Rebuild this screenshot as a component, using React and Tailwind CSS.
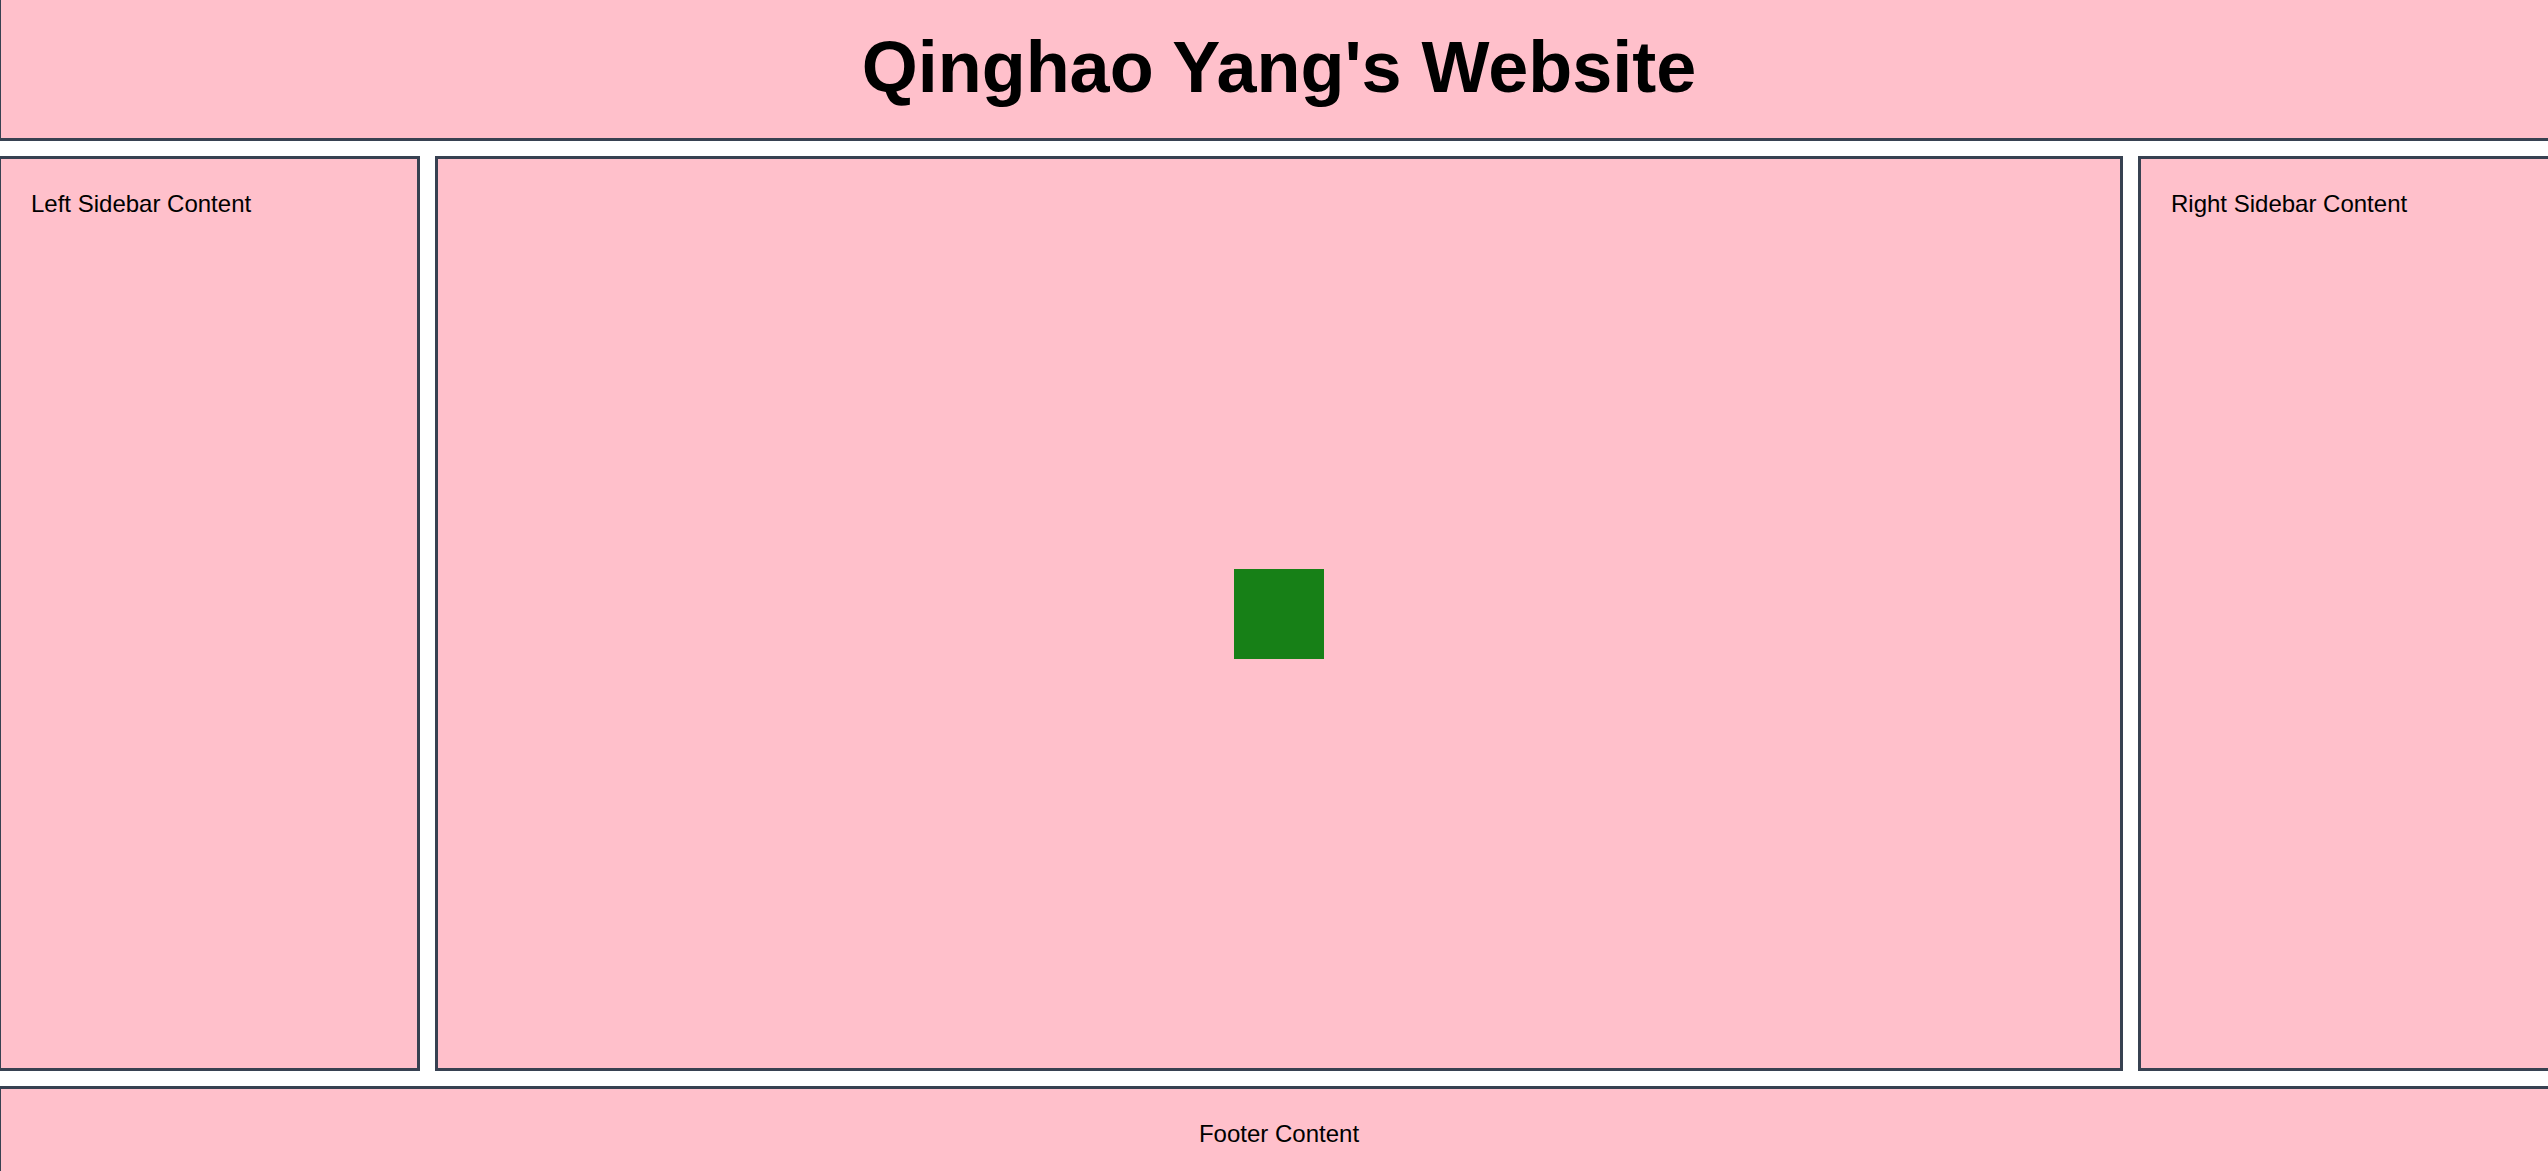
export default function App() {
  return (
    <div
      className="w-full h-[1171px] overflow-hidden bg-white text-black"
      style={{ fontFamily: '"Liberation Sans", Arial, Helvetica, sans-serif' }}
    >
      <div className="w-[2562px] ml-[-2px] mt-[-3px] flex flex-col gap-[15px]">
        <header className="bg-[#ffc0cb] border-[3px] border-[#374151] pt-[31px] pb-[35px] text-center">
          <h1 className="text-[72px] leading-[72px] font-bold">Qinghao Yang's Website</h1>
        </header>
        <div className="grid grid-cols-[1fr_4fr_1fr] gap-[15px] h-[915px]">
          <aside className="bg-[#ffc0cb] border-[3px] border-[#374151] pl-[30px] pt-7 text-[24px] leading-[34px]">
            Left Sidebar Content
          </aside>
          <main className="bg-[#ffc0cb] border-[3px] border-[#374151] flex items-center justify-center">
            <div className="w-[90px] h-[90px] bg-[#178017]" />
          </main>
          <aside className="bg-[#ffc0cb] border-[3px] border-[#374151] pl-[30px] pt-7 text-[24px] leading-[34px]">
            Right Sidebar Content
          </aside>
        </div>
        <footer className="bg-[#ffc0cb] border-[3px] border-[#374151] pt-7 pb-7 h-[200px] text-center text-[24px] leading-[34px]">
          Footer Content
        </footer>
      </div>
    </div>
  );
}
